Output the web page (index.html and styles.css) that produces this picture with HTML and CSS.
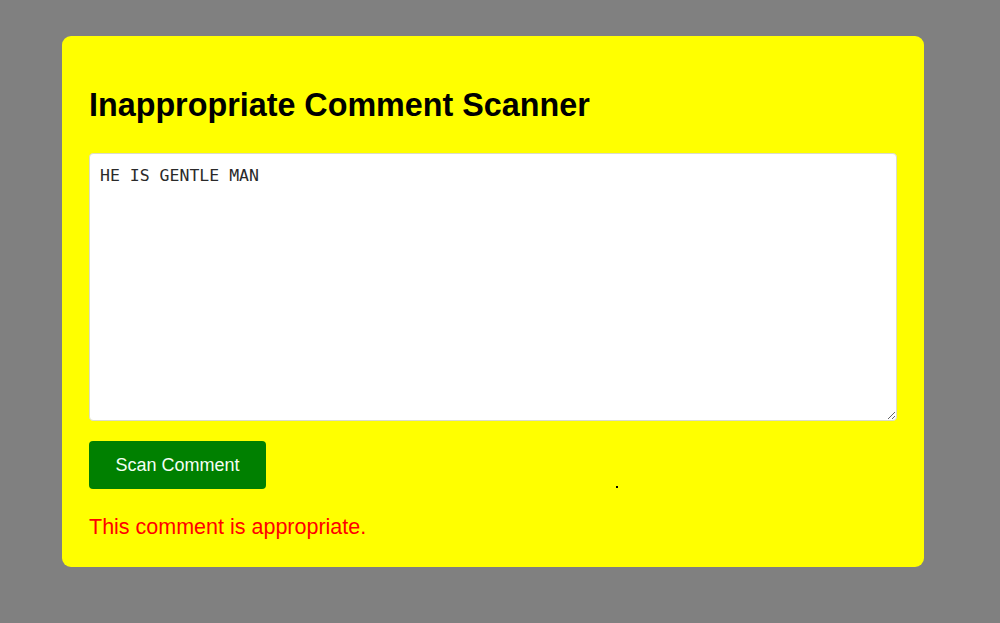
FILE: index.html
```html
<!DOCTYPE html>
<html lang="en">
<head>
<meta charset="utf-8">
<title>Inappropriate Comment Scanner</title>
<link rel="stylesheet" href="styles.css">
</head>
<body>
<div class="page">
  <div class="card">
    <h1 class="title">Inappropriate Comment Scanner</h1>
    <textarea class="comment">HE IS GENTLE MAN</textarea>
    <div class="actions">
      <button class="scan-btn">Scan Comment</button>
      <span class="dot"></span>
    </div>
    <p class="result">This comment is appropriate.</p>
  </div>
</div>
</body>
</html>
```

FILE: styles.css
```css
html, body {
  margin: 0;
  padding: 0;
  background: #808080;
  font-family: "Liberation Sans", Arial, sans-serif;
}

.page {
  padding: 36px 0 0 62px;
}

.card {
  width: 808px;
  height: 477px;
  background: #ffff00;
  border-radius: 9px;
  padding: 27px;
  display: flex;
  flex-direction: column;
  align-items: flex-start;
}

.title {
  margin: 24px 0 29px 0;
  font-size: 32.3px;
  line-height: 37px;
  font-weight: bold;
  color: #000;
}

.comment {
  box-sizing: border-box;
  width: 808px;
  height: 268px;
  margin: 0;
  padding: 11px 10px;
  border: 1px solid #dcdcc8;
  border-radius: 4px;
  background: #fff;
  font-family: "DejaVu Sans Mono", monospace;
  font-size: 16.5px;
  line-height: 21px;
  color: #2a2a2a;
}

.actions {
  position: relative;
  width: 808px;
  margin-top: 20px;
  display: flex;
}

.scan-btn {
  width: 177px;
  height: 48px;
  border: none;
  border-radius: 4px;
  background: #008000;
  color: #f4fff4;
  font-family: "Liberation Sans", Arial, sans-serif;
  font-size: 18px;
  padding: 0;
}

.dot {
  position: absolute;
  left: 527px;
  top: 45px;
  width: 2px;
  height: 2px;
  background: #000;
}

.result {
  margin: 26px 0 0 0;
  font-size: 21.5px;
  line-height: 25px;
  color: #ff0000;
}
```
